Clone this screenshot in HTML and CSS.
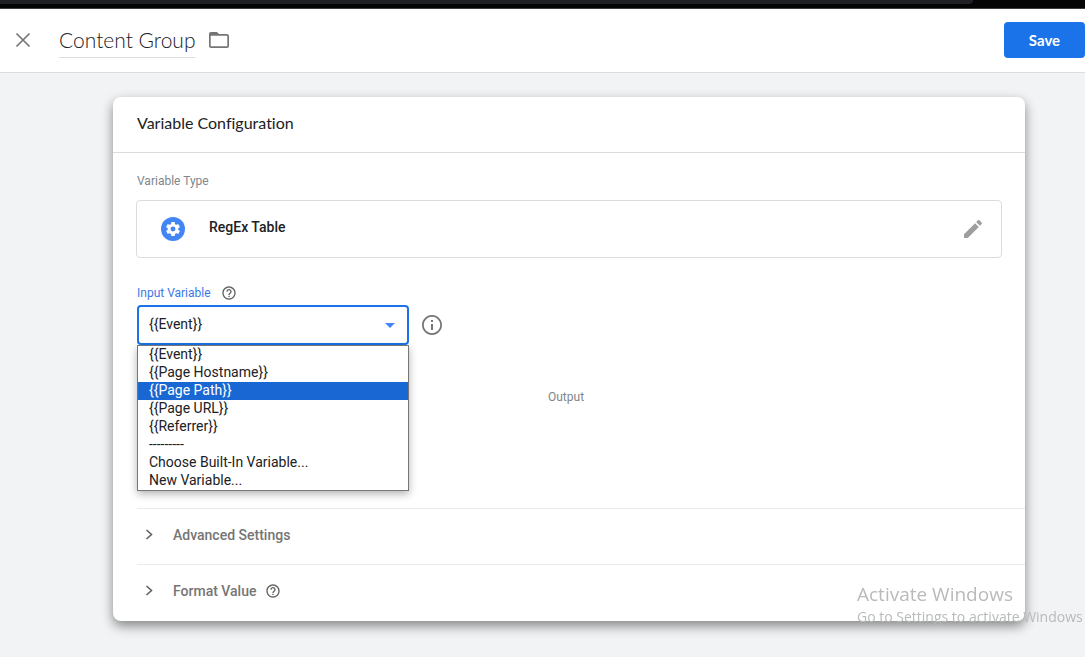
FILE: index.html
```html
<!DOCTYPE html>
<html lang="en">
<head>
<meta charset="utf-8">
<meta name="viewport" content="width=device-width, initial-scale=1">
<title>Content Group</title>
<link rel="stylesheet" href="styles.css">
</head>
<body>
<div class="browser-edge"><div class="browser-tab"></div></div>
<header class="topbar">
  <button class="icon-button close" type="button" aria-label="Close">
    <svg width="24" height="24" viewBox="0 0 24 24" fill="none" stroke="#757575" stroke-width="1.7"><path d="M5.5 5.5l13 13M18.5 5.5l-13 13"/></svg>
  </button>
  <h1 class="title">Content Group</h1>
  <button class="icon-button" type="button" aria-label="Move to folder">
    <svg width="24" height="24" viewBox="0 0 24 24" fill="#757575"><path d="M20 6h-8l-2-2H4c-1.1 0-2 .9-2 2v12c0 1.100.9 2 2 2h16c1.100 0 2-.9 2-2V8c0-1.100-.9-2-2-2zm.3 12.300H3.700V7.700h16.600z"/></svg>
  </button>
  <button class="save" type="button">Save</button>
</header>
<main class="page">
  <section class="card">
    <h2 class="card-title">Variable Configuration</h2>
    <div class="card-body">
      <p class="label">Variable Type</p>
      <div class="type-box">
        <svg width="24" height="24" viewBox="0 0 24 24"><circle cx="12" cy="12" r="12" fill="#4285f4"/><path transform="translate(3.600 3.600) scale(.7)" fill="#fff" d="M19.430 12.980c.04-.32.07-.64.07-.98s-.03-.66-.07-.98l2.110-1.650c.19-.15.24-.42.12-.64l-2-3.460c-.12-.22-.39-.3-.61-.22l-2.490 1c-.52-.4-1.080-.73-1.690-.98l-.38-2.650C14.460 2.180 14.250 2 14 2h-4c-.25 0-.46.18-.49.42l-.38 2.650c-.61.25-1.170.59-1.690.98l-2.490-1c-.23-.09-.49 0-.61.22l-2 3.460c-.13.22-.07.49.12.64l2.110 1.650c-.04.32-.07.65-.07.98s.03.66.07.98l-2.110 1.650c-.19.15-.24.42-.12.64l2 3.460c.12.22.39.3.61.22l2.490-1c.52.4 1.080.73 1.690.98l.38 2.650c.03.24.24.42.49.42h4c.25 0 .46-.18.49-.42l.38-2.650c.61-.25 1.170-.59 1.690-.98l2.490 1c.23.09.49 0 .61-.22l2-3.460c.12-.22.07-.49-.12-.64l-2.110-1.650zM12 15.500a3.500 3.500 0 1 1 0-7 3.500 3.500 0 0 1 0 7z"/></svg>
        <span class="type-name">RegEx Table</span>
        <button class="icon-button" type="button" aria-label="Edit variable type">
          <svg width="24" height="24" viewBox="0 0 24 24" fill="#9e9ea0"><path d="M3 17.250V21h3.750L17.810 9.940l-3.750-3.750L3 17.250zM20.710 7.040c.39-.39.39-1.020 0-1.410l-2.340-2.340c-.39-.39-1.020-.39-1.410 0l-1.830 1.830 3.750 3.750 1.830-1.830z"/></svg>
        </button>
      </div>
      <div class="field-label">
        <label for="input-variable">Input Variable</label>
        <svg class="help" width="16" height="16" viewBox="0 0 24 24" fill="#616161"><path d="M11 18h2v-2h-2v2zm1-16C6.480 2 2 6.480 2 12s4.480 10 10 10 10-4.480 10-10S17.520 2 12 2zm0 18c-4.410 0-8-3.590-8-8s3.590-8 8-8 8 3.590 8 8-3.590 8-8 8zm0-14c-2.210 0-4 1.790-4 4h2c0-1.100.9-2 2-2s2 .9 2 2c0 2-3 1.750-3 5h2c0-2.250 3-2.500 3-5 0-2.210-1.790-4-4-4z"/></svg>
      </div>
      <div class="input-row">
        <div class="select-wrap">
          <select class="select" id="input-variable"><option>{{Event}}</option></select>
          <svg class="caret" width="10" height="5" viewBox="0 0 10 5" fill="#4285f4"><path d="M0 0h10L5 5z"/></svg>
          <ul class="menu" role="listbox" aria-label="Input Variable">
            <li role="option">{{Event}}</li>
            <li role="option">{{Page Hostname}}</li>
            <li role="option" class="active" aria-selected="true">{{Page Path}}</li>
            <li role="option">{{Page URL}}</li>
            <li role="option">{{Referrer}}</li>
            <li role="option">---------</li>
            <li role="option">Choose Built-In Variable...</li>
            <li role="option">New Variable...</li>
          </ul>
        </div>
        <button class="icon-button" type="button" aria-label="Variable information">
          <svg width="24" height="24" viewBox="0 0 24 24" fill="#757575"><path d="M11 17h2v-6h-2v6zm1-15C6.480 2 2 6.480 2 12s4.480 10 10 10 10-4.480 10-10S17.520 2 12 2zm0 18.300a8.300 8.300 0 1 1 0-16.600 8.300 8.300 0 0 1 0 16.600zM11 9h2V7h-2v2z"/></svg>
        </button>
      </div>
      <table class="pairs">
        <thead><tr><td></td><th scope="col">Output</th></tr></thead>
      </table>
    </div>
    <div class="sections">
      <button class="section" type="button">
        <svg width="24" height="24" viewBox="0 0 24 24" fill="none" stroke="#616161" stroke-width="1.600"><path d="M9.500 7l5 4.500-5 4.500"/></svg>
        <span>Advanced Settings</span>
      </button>
      <button class="section" type="button">
        <svg width="24" height="24" viewBox="0 0 24 24" fill="none" stroke="#616161" stroke-width="1.600"><path d="M9.500 7l5 4.500-5 4.500"/></svg>
        <span>Format Value</span>
        <svg class="help" width="16" height="16" viewBox="0 0 24 24" fill="#616161"><path d="M11 18h2v-2h-2v2zm1-16C6.480 2 2 6.480 2 12s4.480 10 10 10 10-4.480 10-10S17.520 2 12 2zm0 18c-4.410 0-8-3.590-8-8s3.590-8 8-8 8 3.590 8 8-3.590 8-8 8zm0-14c-2.210 0-4 1.790-4 4h2c0-1.100.9-2 2-2s2 .9 2 2c0 2-3 1.750-3 5h2c0-2.250 3-2.500 3-5 0-2.210-1.790-4-4-4z"/></svg>
      </button>
    </div>
  </section>
</main>
<div class="watermark">
  <p class="watermark-title">Activate Windows</p>
  <p class="watermark-text">Go to Settings to activate Windows</p>
</div>
</body>
</html>
```
FILE: styles.css
```css
* { box-sizing: border-box; }

body {
  margin: 0;
  min-height: 100vh;
  background: #f1f3f4;
  color: #202124;
  font-family: Roboto, "Liberation Sans", sans-serif;
  font-size: 14px;
}

h1, h2, p, ul { margin: 0; padding: 0; font-weight: 400; }
button { border: 0; padding: 0; background: none; font: inherit; color: inherit; cursor: pointer; }
svg { display: block; flex: none; }

.browser-edge { height: 9px; padding-right: 112px; background: #050505; border-bottom: 1px solid #3c3c3c; }
.browser-tab { height: 4px; background: #202124; border-bottom-right-radius: 8px; }

.topbar {
  display: flex;
  align-items: center;
  height: 64px;
  padding: 0 0 1px 11px;
  background: #fff;
  border-bottom: 1px solid #dadce0;
}
.icon-button { flex: none; }
.close { margin-right: 24px; }
.title {
  margin-right: 12px;
  padding: 6px 0 5px;
  border-bottom: 1px solid #dadce0;
  font-family: Lato, sans-serif;
  font-size: 21px;
  font-weight: 300;
  line-height: 24px;
}
.save {
  width: 81px;
  height: 36px;
  margin-left: auto;
  border-radius: 4px;
  background: #1a73e8;
  color: #fff;
  font-family: Lato, sans-serif;
  font-size: 15px;
  font-weight: 700;
}

.page { padding: 24px 60px 36px 113px; }
.card {
  background: #fff;
  border-radius: 8px;
  box-shadow: 0 5px 12px rgba(0, 0, 0, .45);
}
.card-title {
  height: 56px;
  padding: 0 24px;
  border-bottom: 1px solid #dadce0;
  font-family: Lato, sans-serif;
  font-size: 16px;
  font-variant-ligatures: none;
  line-height: 52px;
}
.card-body { padding: 20px 23px 0; }

.label { padding-left: 1px; color: #80868b; font-size: 12px; line-height: 16px; }
.type-box {
  display: flex;
  align-items: center;
  height: 58px;
  margin-top: 11px;
  padding: 0 16px 0 24px;
  border: 1px solid #dadce0;
  border-radius: 4px;
}
.type-name { flex: 1; padding: 0 0 4px 24px; font-weight: 500; }

.field-label {
  display: flex;
  align-items: center;
  gap: 10px;
  margin-top: 27px;
  padding-left: 1px;
  color: #3b78e7;
  font-size: 12px;
  line-height: 16px;
}
.input-row { display: flex; align-items: center; gap: 11px; margin-top: 4px; padding-left: 1px; }
.select-wrap { position: relative; width: 272px; }
.select {
  display: block;
  width: 100%;
  height: 40px;
  padding: 0 32px 2px 10px;
  border: 2px solid #1a73e8;
  border-radius: 4px;
  outline: 0;
  appearance: none;
  background: #fff;
  color: #202124;
  font: inherit;
}
.caret { position: absolute; top: 18px; right: 14px; pointer-events: none; }
.menu {
  position: absolute;
  z-index: 1;
  top: 100%;
  left: 0;
  width: 100%;
  border: 1px solid #767676;
  background: #fff;
  box-shadow: 0 3px 8px rgba(0, 0, 0, .3);
  list-style: none;
}
.menu li { height: 18px; padding-left: 11px; line-height: 16px; }
.menu .active { background: #1967d2; color: #fff; }

.pairs { width: 100%; margin-top: 44px; border-collapse: collapse; table-layout: fixed; }
.pairs td { width: 412px; padding: 0; }
.pairs th {
  padding: 0;
  color: #80868b;
  font-size: 12px;
  font-weight: 400;
  line-height: 16px;
  text-align: left;
}

.sections { margin-top: 103px; padding: 0 0 1px 24px; }
.section {
  display: flex;
  align-items: center;
  width: 100%;
  height: 56px;
  padding-bottom: 4px;
  border-top: 1px solid #e8eaed;
  color: #757575;
  font-weight: 500;
}
.section span { margin-left: 12px; }
.section .help { margin-left: 9px; }

.watermark {
  position: fixed;
  z-index: 2;
  right: 0;
  bottom: 30px;
  width: 228px;
  overflow: hidden;
  color: #b9babb;
  font-family: "Open Sans", sans-serif;
  white-space: nowrap;
  pointer-events: none;
}
.watermark-title { font-size: 19px; line-height: 26px; }
.watermark-text { font-size: 14px; line-height: 20px; }
```
